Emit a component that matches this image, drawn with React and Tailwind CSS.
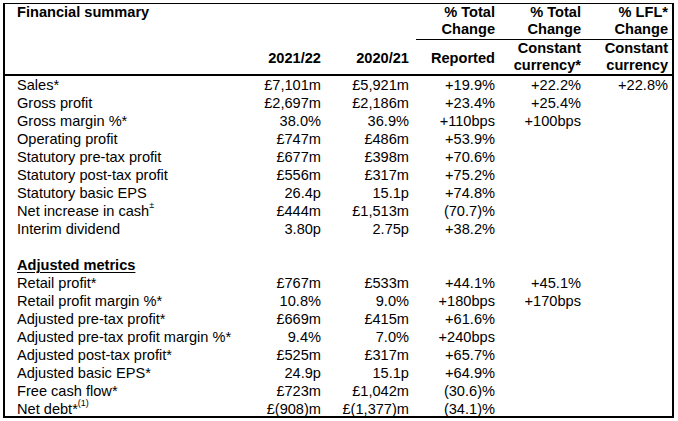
import React from 'react'

const main = [
  ['Sales*', '£7,101m', '£5,921m', '+19.9%', '+22.2%', '+22.8%'],
  ['Gross profit', '£2,697m', '£2,186m', '+23.4%', '+25.4%', ''],
  ['Gross margin %*', '38.0%', '36.9%', '+110bps', '+100bps', ''],
  ['Operating profit', '£747m', '£486m', '+53.9%', '', ''],
  ['Statutory pre-tax profit', '£677m', '£398m', '+70.6%', '', ''],
  ['Statutory post-tax profit', '£556m', '£317m', '+75.2%', '', ''],
  ['Statutory basic EPS', '26.4p', '15.1p', '+74.8%', '', ''],
  [<>Net increase in cash<sup className="text-[9px] leading-none align-[4px]">±</sup></>, '£444m', '£1,513m', '(70.7)%', '', ''],
  ['Interim dividend', '3.80p', '2.75p', '+38.2%', '', ''],
]

const adjusted = [
  ['Retail profit*', '£767m', '£533m', '+44.1%', '+45.1%', ''],
  ['Retail profit margin %*', '10.8%', '9.0%', '+180bps', '+170bps', ''],
  ['Adjusted pre-tax profit*', '£669m', '£415m', '+61.6%', '', ''],
  ['Adjusted pre-tax profit margin %*', '9.4%', '7.0%', '+240bps', '', ''],
  ['Adjusted post-tax profit*', '£525m', '£317m', '+65.7%', '', ''],
  ['Adjusted basic EPS*', '24.9p', '15.1p', '+64.9%', '', ''],
  ['Free cash flow*', '£723m', '£1,042m', '(30.6)%', '', ''],
  [<>Net debt*<sup className="text-[9px] leading-none align-[4px]">(1)</sup></>, '£(908)m', '£(1,377)m', '(34.1)%', '', ''],
]

const cols = 'grid grid-cols-[223px_81px_88px_86px_86px_87px] pl-3'

function Row({ cells }) {
  return (
    <div className={`${cols} h-[18px] leading-[18px]`}>
      {cells.map((c, i) => (
        <div key={i} className={i === 0 ? 'whitespace-nowrap' : 'text-right whitespace-nowrap'}>{c}</div>
      ))}
    </div>
  )
}

export default function App() {
  return (
    <div className="w-[678px] h-[421px] bg-white pt-[3px] pl-[3px] text-black text-[14.6px] font-['Liberation_Sans',Arial,sans-serif]">
      <div className="w-[671px] h-[415px] border-2 border-t border-black overflow-hidden">
        <div className={`${cols} h-[35px] leading-[17px] font-bold`}>
          <div>Financial summary</div>
          <div />
          <div />
          <div className="text-right">% Total<br />Change</div>
          <div className="text-right">% Total<br />Change</div>
          <div className="text-right">% LFL*<br />Change</div>
        </div>
        <div className="ml-[411px] h-px bg-black" />
        <div className={`${cols} h-[34px] leading-[17px] font-bold`}>
          <div />
          <div className="text-right self-center pt-[3px]">2021/22</div>
          <div className="text-right self-center pt-[3px]">2020/21</div>
          <div className="text-right self-center pt-[3px]">Reported</div>
          <div className="text-right">Constant<br />currency*</div>
          <div className="text-right">Constant<br />currency</div>
        </div>
        <div className="h-[2px] bg-black" />
        {main.map((r, i) => <Row key={i} cells={r} />)}
        <div className="h-[18px]" />
        <div className={`${cols} h-[18px] leading-[18px]`}>
          <div className="font-bold underline underline-offset-[2px]">Adjusted metrics</div>
        </div>
        {adjusted.map((r, i) => <Row key={i} cells={r} />)}
      </div>
    </div>
  )
}
